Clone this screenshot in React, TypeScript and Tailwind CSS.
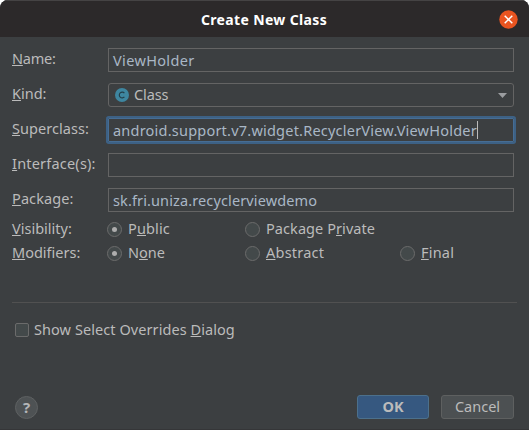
import type { ReactNode } from "react";

function U({ children }: { children: ReactNode }) {
  return (
    <span className="underline decoration-1 underline-offset-1 [text-decoration-skip-ink:none]">{children}</span>
  );
}

function Row({ label, children }: { label: ReactNode; children: ReactNode }) {
  return (
    <div className="flex h-6">
      <div className="-mt-0.5 h-6 w-24 shrink-0 leading-[24px]">{label}</div>
      {children}
    </div>
  );
}

function Field({ children }: { children?: ReactNode }) {
  return (
    <div className="flex h-6 w-[406px] items-center border border-[#646464] pl-1 leading-[22px] text-[#a9b7c6]">
      {children}
    </div>
  );
}

function Radio({ checked = false, children }: { checked?: boolean; children: ReactNode }) {
  return (
    <div className="flex h-6 items-start">
      <span className="mt-[5px] mr-1.5 flex size-[15px] shrink-0 items-center justify-center rounded-full border border-[#6b6b6b] bg-[#43494a]">
        {checked && <span className="size-[5px] rounded-full bg-[#adadad]" />}
      </span>
      <span className="-mt-px leading-[24px]">{children}</span>
    </div>
  );
}

export default function App() {
  return (
    <div className="h-[430px] w-[529px] bg-white">
      <div className="flex h-full flex-col overflow-hidden rounded-t-lg border-b border-[#353638] bg-[#3c3f41] font-['Noto_Sans',sans-serif] text-[14.5px] whitespace-nowrap text-[#bbbbbb]">
        <header className="flex h-[37px] shrink-0 items-center border-t border-[#454344] bg-[#2c292a] pr-[11px] pl-[29px]">
          <h1 className="flex-1 text-center text-[14px] font-bold tracking-[0.35px] text-white">Create New Class</h1>
          <svg className="mt-px" width="19" height="19" viewBox="0 0 19 19">
            <circle cx="9.5" cy="9.5" r="9.2" fill="#e95420" />
            <path d="M5.7 5.7 L13.3 13.3 M13.3 5.7 L5.7 13.3" stroke="#fff" strokeWidth="1.5" />
          </svg>
        </header>
        <main className="flex flex-1 flex-col pt-[11px] pl-3">
          <div className="flex flex-col gap-[11px]">
            <Row label={<span className="tracking-[-0.2px]"><U>N</U>ame:</span>}>
              <Field><span className="tracking-[0.35px]">ViewHolder</span></Field>
            </Row>
            <Row label={<><U>K</U>ind:</>}>
              <div className="flex h-6 w-[406px] items-center rounded-[3px] border border-[#646464] pr-1.5 pl-1.5 leading-[22px]">
                <svg width="14" height="14" viewBox="0 0 14 14">
                  <circle cx="7" cy="7" r="7" fill="#3e86a0" />
                  <path d="M9.4 5.1 A2.9 2.9 0 1 0 9.4 8.9" fill="none" stroke="#233f4b" strokeWidth="1.2" />
                </svg>
                <span className="ml-[5px] flex-1 pb-0.5 tracking-[-0.1px]">Class</span>
                <svg className="mt-px" width="9" height="5" viewBox="0 0 9 5">
                  <path d="M0 0H9L4.5 5Z" fill="#9b9da0" />
                </svg>
              </div>
            </Row>
            <Row label={<span className="tracking-[0.05px]"><U>S</U>uperclass:</span>}>
              <div className="flex h-6 w-[406px] items-center rounded-[1px] border border-[#466d94] pl-1 leading-[22px] text-[#a9b7c6] shadow-[0_0_0_2px_#3d6185]">
                <span className="tracking-[0.22px]">android.support.v7.widget.RecyclerView.ViewHolder</span>
                <span className="mb-px h-[18px] w-px bg-[#bbbbbb]" />
              </div>
            </Row>
            <Row label={<span className="tracking-[0.2px]"><U>I</U>nterface(s):</span>}>
              <Field />
            </Row>
            <Row label={<span className="tracking-[0.1px]"><U>P</U>ackage:</span>}>
              <Field><span className="tracking-[0.12px]">sk.fri.uniza.recyclerviewdemo</span></Field>
            </Row>
          </div>
          <div className="mt-[5px] grid grid-cols-[95px_138px_155px_100px]">
            <div className="-mt-px leading-[24px]"><U>V</U>isibility:</div>
            <Radio checked><span className="tracking-[0.12px]">P<U>u</U>blic</span></Radio>
            <Radio><span className="tracking-[0.07px]">Package P<U>r</U>ivate</span></Radio>
            <span />
            <div className="-mt-px leading-[24px]"><U>M</U>odifiers:</div>
            <Radio checked>N<U>o</U>ne</Radio>
            <Radio><span className="tracking-[0.22px]"><U>A</U>bstract</span></Radio>
            <Radio><span className="tracking-[0.2px]"><U>F</U>inal</span></Radio>
          </div>
          <div className="mt-[37px] h-px w-[505px] bg-[#515151]" />
          <div className="mt-[15px] flex h-6 items-center pl-[3px]">
            <span className="mr-[5px] size-[14px] rounded-[2px] border border-[#6b6b6b] bg-[#43494a]" />
            <span className="pb-0.5 leading-[22px] tracking-[0.07px]">Show Select Overrides <U>D</U>ialog</span>
          </div>
        </main>
        <footer className="flex h-[34px] shrink-0 items-start pr-[15px] pl-[15px]">
          <span className="mt-px flex size-[23px] items-center justify-center rounded-full border border-[#5e6162] bg-[#4e5254] text-[15px] font-bold text-[#b4b6b8]">?</span>
          <span className="flex-1" />
          <button className="mr-3 flex h-6 w-[72px] items-center justify-center rounded-[3px] border border-[#4c708c] bg-[#365880] pb-0.5 leading-[20px] font-bold">OK</button>
          <button className="flex h-6 w-[73px] items-center justify-center rounded-[3px] border border-[#5e6060] bg-[#4c5052] pb-0.5 leading-[20px]">Cancel</button>
        </footer>
      </div>
    </div>
  );
}
